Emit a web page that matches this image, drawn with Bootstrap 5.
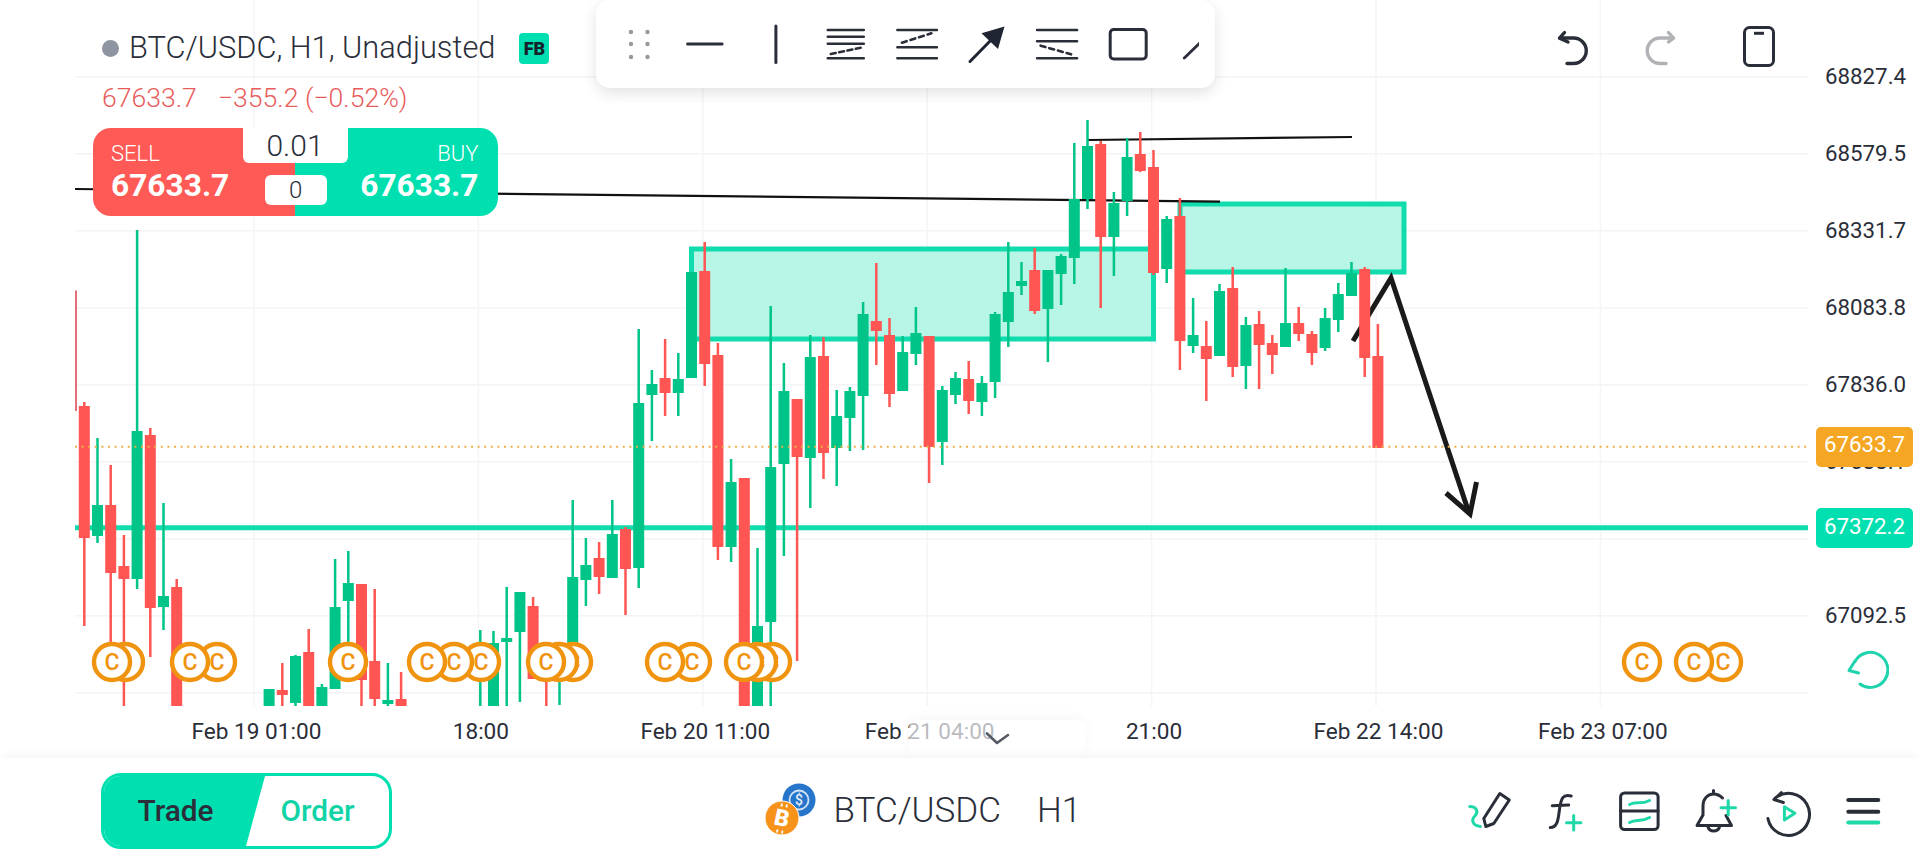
<!doctype html>
<html lang="en">
<head>
<meta charset="utf-8">
<title>BTC/USDC H1</title>
<link href="https://cdn.jsdelivr.net/npm/bootstrap@5.3.0/dist/css/bootstrap.min.css" rel="stylesheet">
<style>
:root{--teal:#00dfb0;--ink:#2a2e39;--sellred:#ff5a55;}
html,body{margin:0;height:864px;overflow:hidden;background:#fff;}
body{font-family:Roboto,"Liberation Sans",sans-serif;color:var(--ink);}
.app-shell{width:1920px;height:864px;}
.stage{height:758px;}
.plot-col{width:1808px;}
.chart-canvas{display:block;width:1808px;height:706px;}
.time-row{height:52px;padding-left:141.8px;font-size:22.6px;}
.time-cell{width:224.4px;text-align:center;white-space:nowrap;flex:none;padding-left:5px;}
.price-col{width:112px;padding-top:38px;font-size:22.3px;}
.price-cell{height:77px;padding-left:17px;}
.price-tag{left:1816px;width:97px;height:40px;border-radius:5px;color:#fff;font-size:22.3px;}
.tag-last{top:427px;background:#f5a623;padding-bottom:4px;}
.tag-alert{top:508px;background:var(--teal);padding-bottom:2px;}
.reset-icon{left:1845px;top:647px;width:44px;height:44px;}
.legend-box{left:102px;top:28px;}
.legend-dot{width:17px;height:17px;background:#8e94a0;border-radius:50%;}
.legend-title{font-size:30.8px;line-height:40px;font-weight:300;margin-left:10px;}
.fb-tag{width:30px;height:31px;margin-left:24px;background:var(--teal);border-radius:4px;font-size:18px;font-weight:900;color:#14202a;}
.legend-quote{font-size:26.6px;line-height:36px;margin-top:12px;color:#e85c5c;font-weight:300;}
.legend-quote span+span{margin-left:21px;}
.trade-widget{width:404.5px;height:88px;margin-left:-9px;margin-top:12px;border-radius:18px;overflow:hidden;color:#fff;}
.side-sell{width:202px;background:var(--sellred);padding:17px 0 0 18px;}
.side-buy{width:202.5px;background:var(--teal);padding:17px 19px 0 0;text-align:right;}
.side-name{font-size:22px;line-height:18px;font-weight:300;}
.side-price{font-size:31.7px;line-height:40px;font-weight:700;margin-top:3px;}
.lot-box{left:149.5px;top:0;width:105px;height:35px;background:#fff;border-radius:0 0 6px 6px;color:var(--ink);font-size:30px;font-weight:300;line-height:35px;text-align:center;}
.spread-box{left:172px;top:47px;width:61.5px;height:29.5px;background:#fff;border-radius:6px;color:var(--ink);font-size:24px;font-weight:300;line-height:30px;text-align:center;}
.tool-strip{left:595.5px;top:0;width:619px;height:88px;background:#fff;border-radius:14px;box-shadow:0 5px 14px rgba(30,35,50,.13);padding-left:4.5px;}
.tool-clip{width:599px;overflow:hidden;}
.tool-cell{width:70.4px;height:50px;flex:none;display:block;}
.top-actions{left:1550px;top:24px;}
.top-actions svg{width:44px;height:44px;display:block;}
.gap-redo{margin-left:44px;}
.gap-device{margin-left:55px;}
.collapse-tab{left:909px;top:720px;width:176px;height:38px;background:rgba(255,255,255,.68);border-radius:8px 8px 0 0;box-shadow:0 -3px 12px rgba(0,0,0,.035);}
.bottom-bar{height:106px;padding:0 19.7px 0 101px;box-shadow:0 -7px 8px -3px rgba(0,0,0,.035);}
.mode-switch{width:291px;height:76px;border:3px solid var(--teal);border-radius:20px;overflow:hidden;font-size:29.8px;font-weight:500;}
.mode-trade{width:161px;margin-right:-19px;padding-right:18px;background:var(--teal);clip-path:polygon(0 0,100% 0,calc(100% - 19px) 100%,0 100%);}
.mode-order{flex:1;color:#10d3a6;}
.pair-title{font-size:35px;font-weight:300;white-space:nowrap;}
.pair-title span+span{margin-left:36px;}
.coin-pair{width:70px;height:70px;display:block;}
.foot-cell{width:74.6px;height:60px;display:block;flex:none;}
svg text{font-family:Roboto,"Liberation Sans",sans-serif;}
</style>
</head>
<body>
<div class="app-shell d-flex flex-column">
  <div class="stage d-flex position-relative">
    <div class="plot-col">
      <svg id="chart" class="chart-canvas" viewBox="0 0 1808 706" xmlns="http://www.w3.org/2000/svg" aria-label="Candlestick chart"></svg>
      <div class="time-row d-flex align-items-center">
        <div class="time-cell">Feb 19 01:00</div>
        <div class="time-cell">18:00</div>
        <div class="time-cell">Feb 20 11:00</div>
        <div class="time-cell">Feb 21 04:00</div>
        <div class="time-cell">21:00</div>
        <div class="time-cell">Feb 22 14:00</div>
        <div class="time-cell">Feb 23 07:00</div>
      </div>
    </div>
    <div class="price-col">
      <div class="price-cell d-flex align-items-center">68827.4</div>
      <div class="price-cell d-flex align-items-center">68579.5</div>
      <div class="price-cell d-flex align-items-center">68331.7</div>
      <div class="price-cell d-flex align-items-center">68083.8</div>
      <div class="price-cell d-flex align-items-center">67836.0</div>
      <div class="price-cell d-flex align-items-center">67588.1</div>
      <div class="price-cell d-flex align-items-center"></div>
      <div class="price-cell d-flex align-items-center">67092.5</div>
    </div>

    <div class="price-tag tag-last position-absolute d-flex align-items-center justify-content-center">67633.7</div>
    <div class="price-tag tag-alert position-absolute d-flex align-items-center justify-content-center">67372.2</div>
    <svg class="reset-icon position-absolute" viewBox="1845 647 44 44" fill="none" stroke="#1fd3ae" stroke-width="3" stroke-linecap="round" stroke-linejoin="round">
      <path d="M1855 661.5A17.5 17.5 0 1 1 1860 684"/><path d="M1855 661L1849 670.5L1858.5 673"/>
    </svg>

    <div class="legend-box position-absolute">
      <div class="d-flex align-items-center">
        <span class="legend-dot"></span>
        <span class="legend-title">BTC/USDC, H1, Unadjusted</span>
        <span class="fb-tag d-flex align-items-center justify-content-center">FB</span>
      </div>
      <div class="legend-quote"><span>67633.7</span><span>−355.2 (−0.52%)</span></div>
      <div class="trade-widget d-flex position-relative">
        <div class="side-sell"><div class="side-name">SELL</div><div class="side-price">67633.7</div></div>
        <div class="side-buy"><div class="side-name">BUY</div><div class="side-price">67633.7</div></div>
        <div class="lot-box position-absolute">0.01</div>
        <div class="spread-box position-absolute">0</div>
      </div>
    </div>

    <div class="tool-strip position-absolute d-flex align-items-center">
      <div class="tool-clip d-flex">
        <svg class="tool-cell" viewBox="600 19 70.4 50" fill="#999"><circle cx="631" cy="32" r="2.2"/><circle cx="647.5" cy="32" r="2.2"/><circle cx="631" cy="44" r="2.2"/><circle cx="647.5" cy="44" r="2.2"/><circle cx="631" cy="57" r="2.2"/><circle cx="647.5" cy="57" r="2.2"/></svg>
        <svg class="tool-cell" viewBox="670.4 19 70.4 50" stroke="#2a2e39" stroke-width="3" stroke-linecap="round"><path d="M688 44H722.5"/></svg>
        <svg class="tool-cell" viewBox="740.8 19 70.4 50" stroke="#2a2e39" stroke-width="3" stroke-linecap="round"><path d="M775.7 26V62.5"/></svg>
        <svg class="tool-cell" viewBox="811.2 19 70.4 50" fill="none" stroke="#2a2e39" stroke-width="2.6" stroke-linecap="round"><path d="M828 30H864M828 36.7H864M828 43.7H864M828 58.3H864"/><path d="M831 54L861.5 47.7" stroke-dasharray="5 3.5"/></svg>
        <svg class="tool-cell" viewBox="881.6 19 70.4 50" fill="none" stroke="#2a2e39" stroke-width="2.6" stroke-linecap="round"><path d="M897 30H936.5M897 47.3H936.5M897 58.3H936.5"/><path d="M901.5 42.7L931 33.3" stroke-dasharray="5 4"/></svg>
        <svg class="tool-cell" viewBox="952 19 70.4 50"><path d="M970 61.5L993 38" stroke="#1f2533" stroke-width="3" stroke-linecap="round"/><path d="M1004.5 26.5L981.5 33.2L998 49Z" fill="#1f2533"/></svg>
        <svg class="tool-cell" viewBox="1022.4 19 70.4 50" fill="none" stroke="#2a2e39" stroke-width="2.6" stroke-linecap="round"><path d="M1037.5 30H1077.5M1037.5 41.3H1077.5M1037.5 58.3H1077.5"/><path d="M1041 45.7L1071.5 54.3" stroke-dasharray="5 4"/></svg>
        <svg class="tool-cell" viewBox="1092.8 19 70.4 50" fill="none" stroke="#2a2e39" stroke-width="3"><rect x="1110" y="29.5" width="36" height="29.5" rx="3.5"/></svg>
        <svg class="tool-cell" viewBox="1163.2 19 70.4 50" stroke="#2a2e39" stroke-width="2.8" stroke-linecap="round"><path d="M1184.5 58L1200 43"/></svg>
      </div>
    </div>

    <div class="top-actions position-absolute d-flex">
      <svg viewBox="1550 24 44 44" fill="none" stroke="#2a2e39" stroke-width="3.4" stroke-linecap="round" stroke-linejoin="round"><path d="M1564.5 32.5L1559.5 38.2L1568 42"/><path d="M1560 38H1573.5A12.7 12.7 0 0 1 1573.5 63.5H1567"/></svg>
      <svg class="gap-redo" viewBox="1638 24 44 44" fill="none" stroke="#b0b2b5" stroke-width="3.4" stroke-linecap="round" stroke-linejoin="round"><path d="M1668.5 32.5L1673.5 38.2L1668.5 42"/><path d="M1673 38H1660A12.7 12.7 0 0 0 1660 63.5H1666"/></svg>
      <svg class="gap-device" viewBox="1737 24 44 44" fill="none" stroke="#2a2e39" stroke-width="3"><rect x="1744.5" y="27.5" width="29" height="38" rx="5"/><path d="M1754 33.3H1764"/></svg>
    </div>

    <div class="collapse-tab position-absolute d-flex justify-content-center">
      <svg width="40" height="38" viewBox="977 720 40 38" fill="none" stroke="#555a63" stroke-width="2.6" stroke-linecap="round" stroke-linejoin="round"><path d="M987 733.5L997 743L1008 735"/></svg>
    </div>
  </div>

  <div class="bottom-bar d-flex align-items-center justify-content-between bg-white position-relative">
    <div class="mode-switch d-flex">
      <div class="mode-trade d-flex align-items-center justify-content-center">Trade</div>
      <div class="mode-order d-flex align-items-center justify-content-center">Order</div>
    </div>
    <div class="d-flex align-items-center">
      <svg class="coin-pair" viewBox="767 776 70 70">
        <circle cx="802" cy="800" r="16.5" fill="#2775ca"/>
        <circle cx="802" cy="800" r="9.5" fill="none" stroke="#cfe2f7" stroke-width="1.8"/>
        <text x="802" y="805" font-size="14" font-weight="500" fill="#e4effa" text-anchor="middle">$</text>
        <circle cx="785" cy="818" r="17" fill="#f7931a" stroke="#fff" stroke-width="1"/>
        <text x="785" y="826" font-size="23" font-weight="900" fill="#fff" text-anchor="middle" transform="rotate(12 785 818)">B</text>
        <path d="M785 803.5L784.4 806.5M790 804.5L789.4 807.5M780.5 829.5L780 832.5M785.5 830.5L785 833.5" stroke="#fff" stroke-width="1.8"/>
      </svg>
      <div class="pair-title"><span>BTC/USDC</span><span>H1</span></div>
    </div>
    <div class="d-flex">
      <svg class="foot-cell" viewBox="1452.7 781 74.6 60" fill="none" stroke-linecap="round" stroke-linejoin="round" stroke-width="3"><path d="M1480 826.5C1472 825.5 1470.5 820 1475 815.5C1478.5 811.5 1476 806.5 1469.5 806.5" stroke="#1fd8a8"/><path d="M1485.5 826.5L1483.5 818.5L1499.5 793.5L1509 800L1493.5 823.5Z" stroke="#2a2e39"/></svg>
      <svg class="foot-cell" viewBox="1527.3 781 74.6 60" fill="none" stroke-linecap="round" stroke-linejoin="round" stroke-width="3"><path d="M1571.5 796C1563 793.5 1561.5 799 1560 808C1558.5 818 1558.5 827.5 1550.5 827.5M1552.5 805.8L1569 805" stroke="#2a2e39"/><path d="M1574 815.5V830M1566.8 822.7H1581.2" stroke="#1fd8a8"/></svg>
      <svg class="foot-cell" viewBox="1601.9 781 74.6 60" fill="none" stroke-linecap="round" stroke-linejoin="round" stroke-width="3"><rect x="1620.5" y="793" width="37.5" height="36.5" rx="4" stroke="#2a2e39"/><path d="M1620.5 811H1658" stroke="#2a2e39"/><path d="M1629.5 804.5C1636 801 1641 805 1649.5 800.5M1629.5 822.5C1636 819 1641 822.5 1649.5 817.5" stroke="#1fd8a8"/></svg>
      <svg class="foot-cell" viewBox="1676.5 781 74.6 60" fill="none" stroke-linecap="round" stroke-linejoin="round" stroke-width="3"><path d="M1722 798C1719 795 1716 794 1713 794C1707 794 1702.5 799 1702.5 806V815L1696.5 825.5H1731L1725.5 815.5M1713 790.5V794M1707.5 827A6 5.5 0 0 0 1719 827" stroke="#2a2e39"/><path d="M1727.7 800.5V815M1720.5 807.7H1735" stroke="#1fd8a8"/></svg>
      <svg class="foot-cell" viewBox="1751.1 781 74.6 60" fill="none" stroke-linecap="round" stroke-linejoin="round" stroke-width="3"><path d="M1775.5 798A21 21 0 1 1 1768 818.5M1781.5 792.7L1774 799.5L1783.5 802.5" stroke="#2a2e39"/><path d="M1784.5 806.7L1795 813.3L1784.5 820Z" stroke="#1fd8a8"/></svg>
      <svg class="foot-cell" viewBox="1825.7 781 74.6 60" fill="none" stroke-linecap="round" stroke-width="4"><path d="M1848 800H1878M1848 811.7H1878" stroke="#2a2e39"/><path d="M1848 822.4H1878" stroke="#1fd8a8"/></svg>
    </div>
  </div>
</div>
<script src="https://cdn.jsdelivr.net/npm/bootstrap@5.3.0/dist/js/bootstrap.bundle.min.js"></script>
<script>
(function(){
  // [index, colour, wickTop, bodyTop, bodyBottom, wickBottom] in chart pixels
  var G='g',R='r';
  var data=[
  [0,R,402,406,538,626],[1,G,438,505,536,543],[2,R,465,505,573,642],[3,R,535,566,579,706],[4,G,230,431,579,589],[5,R,428,435,608,657],[6,G,503,596,607,630],[7,R,579,587,706,706],
  [14,G,689,689,706,706],[15,R,663,690,695,706],[16,G,655,656,703,706],[17,R,629,652,706,706],[18,G,684,687,706,706],[19,G,559,607,689,689],[20,G,551,583,601,643],[21,R,584,584,680,706],[22,R,589,661,699,706],[23,G,663,700,704,706],[24,R,672,699,706,706],
  [30,G,630,630,630,706],[31,G,631,643,706,706],[32,G,587,638,642,706],[33,G,592,592,632,702],[34,R,597,606,679,679],[35,R,650,650,650,706],[36,G,660,660,660,705],[37,G,500,577,655,655],[38,G,538,565,580,606],[39,R,542,558,577,594],[40,G,500,534,578,578],[41,R,527,529,569,615],[42,G,329,403,568,588],
  [43,G,370,384,395,441],[44,R,339,378,393,416],[45,G,353,379,393,416],[46,G,272,272,378,378],[47,R,242,271,364,386],[48,R,343,355,547,560],[49,G,459,482,547,562],[50,R,478,478,706,706],[51,G,548,626,706,706],[52,G,306,467,622,706],[53,G,363,391,464,556],[54,R,399,399,457,661],[55,G,335,357,458,508],[56,R,337,356,453,479],[57,G,390,416,448,486],[58,G,387,391,418,451],[59,G,302,314,396,450],[60,R,263,321,331,365],[61,R,318,335,394,407],[62,G,336,352,391,391],[63,G,307,333,354,365],[64,R,336,336,447,483],[65,G,386,390,442,465],[66,G,372,378,395,404],[67,R,361,379,401,414],[68,G,376,383,402,416],[69,G,312,314,382,398],[70,G,242,292,322,347],[71,G,262,281,286,295],[72,R,248,270,311,314],
  [73,G,270,270,309,362],[74,G,254,256,274,305],[75,G,143,199,258,284],[76,G,120,146,199,209],[77,R,141,144,237,308],[78,G,192,203,237,276],[79,G,138,157,201,216],[80,R,132,154,171,172],[81,R,150,167,273,275],[82,G,216,219,269,283],[83,R,198,216,341,370],[84,G,298,335,346,353],[85,R,321,346,359,401],[86,G,284,291,356,356],[87,R,267,288,367,377],[88,G,317,325,366,389],[89,R,311,324,345,389],[90,R,335,343,355,374],[91,G,268,323,347,347],[92,R,307,323,334,341],[93,R,331,334,353,365],[94,G,308,318,348,351],[95,G,283,294,320,332],[96,G,262,273,296,296],[97,R,267,269,358,377],[98,R,324,356,448,448]
  ];
  var col={g:'#00c488',r:'#ff5653'},s='';
  s+='<defs><clipPath id="plotclip"><rect x="75" y="0" width="1733" height="706"/></clipPath></defs>';
  var i;
  for(i=0;i<9;i++){var y=76.7+77*i;s+='<path d="M75 '+y+'H1808" stroke="#f3f4f6" stroke-width="1.5"/>';}
  for(i=0;i<7;i++){var x=254+224.4*i;s+='<path d="M'+x+' 0V706" stroke="#f4f5f7" stroke-width="1.5"/>';}
  s+='<path d="M75 527.7H1808" stroke="#10dcae" stroke-width="5"/>';
  s+='<rect x="691.5" y="249" width="462" height="90" fill="#b7f5e6" stroke="#10dcae" stroke-width="5"/>';
  s+='<rect x="1180" y="204" width="224" height="68" fill="#b7f5e6" stroke="#10dcae" stroke-width="5"/>';
  s+='<path d="M1088 140L1352 137" stroke="#111" stroke-width="2.2"/>';
  s+='<path d="M75 189L1220 201.7" stroke="#111" stroke-width="2.2"/>';
  s+='<path d="M1353 341L1391 278L1469 513" fill="none" stroke="#1a1a1a" stroke-width="5"/>';
  s+='<path d="M1446 493L1470 514L1476.5 482" fill="none" stroke="#1a1a1a" stroke-width="5"/>';
  s+='<g clip-path="url(#plotclip)">';
  s+='<rect x="75" y="290.5" width="2" height="120.5" fill="#e0707a"/>';
  data.forEach(function(d){
    var cx=84.3+13.2*d[0],c=col[d[1]];
    s+='<rect x="'+(cx-1.25)+'" y="'+d[2]+'" width="2.5" height="'+(d[5]-d[2])+'" fill="'+c+'"/>';
    if(d[4]>d[3])s+='<rect x="'+(cx-5.5)+'" y="'+d[3]+'" width="11" height="'+(d[4]-d[3])+'" fill="'+c+'"/>';
  });
  s+='</g>';
  s+='<path d="M75 446.7H1808" stroke="#e9b04a" stroke-width="2" stroke-dasharray="2 4.6"/>';
  [1723,1694,1642,772,758,744,692,665,573,559,546,481,454,427,348,217,190,125,112].forEach(function(m){
    s+='<circle cx="'+m+'" cy="662" r="18" fill="#fff" stroke="#f0930f" stroke-width="4.4"/>';
    s+='<text x="'+m+'" y="670" font-size="23" font-weight="500" fill="#f0930f" text-anchor="middle">C</text>';
  });
  document.getElementById('chart').innerHTML=s;
})();
</script>
</body>
</html>
